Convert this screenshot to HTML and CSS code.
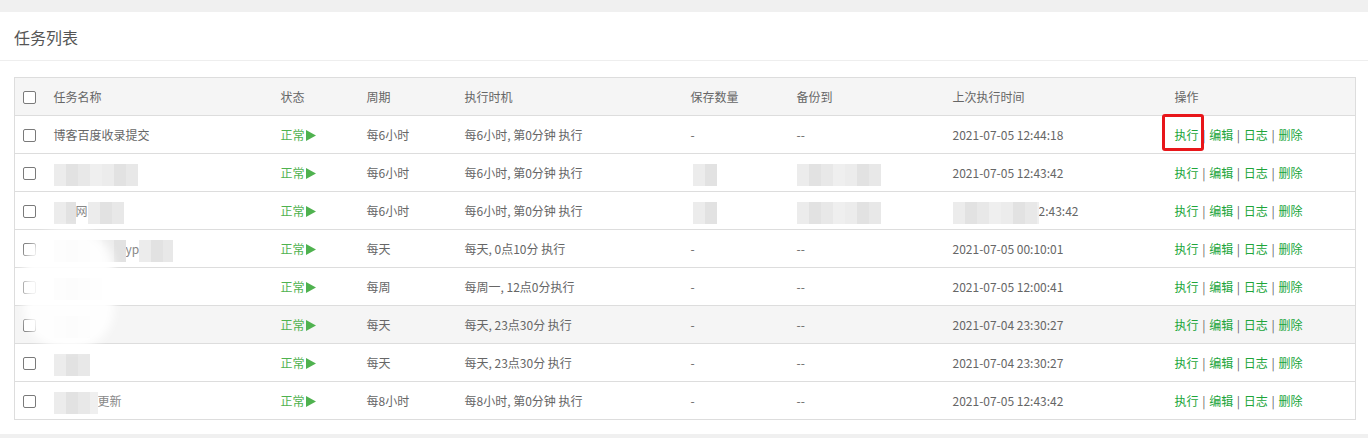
FILE: index.html
```html
<!DOCTYPE html>
<html lang="zh-CN">
<head>
<meta charset="utf-8">
<title>任务列表</title>
<link rel="stylesheet" href="styles.css">
</head>
<body>
<div class="panel">
  <div class="panel-title">任务列表</div>
  <div class="panel-body">
    <div class="table-wrap">
      <table class="tasks">
        <colgroup>
          <col style="width:31px"><col style="width:227px"><col style="width:86px"><col style="width:98px"><col style="width:226px"><col style="width:106px"><col style="width:156px"><col style="width:222px"><col>
        </colgroup>
        <thead>
          <tr><th class="ck"><span class="cb"></span></th><th>任务名称</th><th>状态</th><th>周期</th><th>执行时机</th><th>保存数量</th><th>备份到</th><th>上次执行时间</th><th>操作</th></tr>
        </thead>
        <tbody>
          <tr><td class="ck"><span class="cb"></span></td><td>博客百度收录提交</td><td class="st">正常<svg class="tri" width="10" height="11" viewBox="0 0 10 11"><polygon points="0,0 10,5.5 0,11" fill="#4fb24f"/></svg></td><td>每6小时</td><td>每6小时, 第0分钟 执行</td><td>-</td><td>--</td><td>2021-07-05 12:44:18</td><td class="ops"><a class="first">执行</a> | <a>编辑</a> | <a>日志</a> | <a>删除</a></td></tr>
          <tr><td class="ck"><span class="cb"></span></td><td><span class="mask" style="width:84px"></span></td><td class="st">正常<svg class="tri" width="10" height="11" viewBox="0 0 10 11"><polygon points="0,0 10,5.5 0,11" fill="#4fb24f"/></svg></td><td>每6小时</td><td>每6小时, 第0分钟 执行</td><td><span class="mask" style="width:24px;margin-left:2px"></span></td><td><span class="mask" style="width:84px"></span></td><td>2021-07-05 12:43:42</td><td class="ops"><a>执行</a> | <a>编辑</a> | <a>日志</a> | <a>删除</a></td></tr>
          <tr><td class="ck"><span class="cb"></span></td><td><span class="mask" style="width:22px"></span><span class="faint">网</span><span class="mask" style="width:36px"></span></td><td class="st">正常<svg class="tri" width="10" height="11" viewBox="0 0 10 11"><polygon points="0,0 10,5.5 0,11" fill="#4fb24f"/></svg></td><td>每6小时</td><td>每6小时, 第0分钟 执行</td><td><span class="mask" style="width:24px;margin-left:2px"></span></td><td><span class="mask" style="width:84px"></span></td><td><span class="mask" style="width:86px"></span>2:43:42</td><td class="ops"><a>执行</a> | <a>编辑</a> | <a>日志</a> | <a>删除</a></td></tr>
          <tr><td class="ck"><span class="cb"></span></td><td><span class="mask" style="width:72px"></span><span class="faint">yp</span><span class="mask" style="width:34px"></span></td><td class="st">正常<svg class="tri" width="10" height="11" viewBox="0 0 10 11"><polygon points="0,0 10,5.5 0,11" fill="#4fb24f"/></svg></td><td>每天</td><td>每天, 0点10分 执行</td><td>-</td><td>--</td><td>2021-07-05 00:10:01</td><td class="ops"><a>执行</a> | <a>编辑</a> | <a>日志</a> | <a>删除</a></td></tr>
          <tr><td class="ck"><span class="cb"></span></td><td><span class="mask" style="width:48px"></span></td><td class="st">正常<svg class="tri" width="10" height="11" viewBox="0 0 10 11"><polygon points="0,0 10,5.5 0,11" fill="#4fb24f"/></svg></td><td>每周</td><td>每周一, 12点0分执行</td><td>-</td><td>--</td><td>2021-07-05 12:00:41</td><td class="ops"><a>执行</a> | <a>编辑</a> | <a>日志</a> | <a>删除</a></td></tr>
          <tr class="hover"><td class="ck"><span class="cb"></span></td><td><span class="mask" style="width:36px"></span></td><td class="st">正常<svg class="tri" width="10" height="11" viewBox="0 0 10 11"><polygon points="0,0 10,5.5 0,11" fill="#4fb24f"/></svg></td><td>每天</td><td>每天, 23点30分 执行</td><td>-</td><td>--</td><td>2021-07-04 23:30:27</td><td class="ops"><a>执行</a> | <a>编辑</a> | <a>日志</a> | <a>删除</a></td></tr>
          <tr><td class="ck"><span class="cb"></span></td><td><span class="mask" style="width:36px"></span></td><td class="st">正常<svg class="tri" width="10" height="11" viewBox="0 0 10 11"><polygon points="0,0 10,5.5 0,11" fill="#4fb24f"/></svg></td><td>每天</td><td>每天, 23点30分 执行</td><td>-</td><td>--</td><td>2021-07-04 23:30:27</td><td class="ops"><a>执行</a> | <a>编辑</a> | <a>日志</a> | <a>删除</a></td></tr>
          <tr><td class="ck"><span class="cb"></span></td><td><span class="mask" style="width:44px"></span><span class="faint">更新</span></td><td class="st">正常<svg class="tri" width="10" height="11" viewBox="0 0 10 11"><polygon points="0,0 10,5.5 0,11" fill="#4fb24f"/></svg></td><td>每8小时</td><td>每8小时, 第0分钟 执行</td><td>-</td><td>--</td><td>2021-07-05 12:43:42</td><td class="ops"><a>执行</a> | <a>编辑</a> | <a>日志</a> | <a>删除</a></td></tr>
        </tbody>
      </table>
      <div class="smear"></div>
      <div class="redbox"></div>
    </div>
  </div>
</div>
</body>
</html>
```
FILE: styles.css
```css
html, body {
  margin: 0;
  padding: 0;
}
body {
  background: #f0f0f0;
  font-family: "Noto Sans CJK SC", "Microsoft YaHei", sans-serif;
  font-size: 12px;
  color: #666;
  padding-top: 12px;
  height: 438px;
  box-sizing: border-box;
}
.panel {
  background: #fff;
  height: 422px;
  box-sizing: border-box;
}
.panel-title {
  height: 49px;
  line-height: 51px;
  padding-left: 14px;
  font-size: 16px;
  color: #555;
  border-bottom: 1px solid #eee;
  box-sizing: border-box;
}
.panel-body {
  padding: 16px 12px 0 14px;
}
.table-wrap {
  position: relative;
}
.tasks {
  width: 1342px;
  border-collapse: collapse;
  table-layout: fixed;
  border: 1px solid #ddd;
}
.tasks th, .tasks td {
  height: 37px;
  padding: 0 0 0 8px;
  text-align: left;
  font-weight: normal;
  border-top: 1px solid #ddd;
  white-space: nowrap;
  overflow: hidden;
  vertical-align: middle;
  line-height: 37px;
}
.tasks thead tr {
  background: #f5f5f5;
}
.tasks tr.hover {
  background: #f5f5f5;
}
.tasks .ck {
  padding-left: 8px;
}
.cb {
  display: inline-block;
  width: 11px;
  height: 11px;
  border: 1px solid #7a7a7a;
  border-radius: 2px;
  background: #fff;
  vertical-align: middle;
  position: relative;
  top: -1px;
}
.st {
  color: #4fb24f;
}
.tri {
  vertical-align: middle;
  margin-left: 1px;
  position: relative;
  top: -1px;
}
.ops {
  word-spacing: 1px;
}
.ops a {
  color: #20a53a;
  text-decoration: none;
}
.mask {
  display: inline-block;
  height: 22px;
  vertical-align: middle;
  background:
    linear-gradient(90deg, #ececec 0 25%, #e2e2e2 25% 50%, #e8e8e8 50% 75%, #efefef 75% 100%);
  background-size: 48px 11px;
  filter: blur(0.6px);
}
.faint {
  color: #888;
}
.smear {
  position: absolute;
  left: 10px;
  top: 152px;
  width: 90px;
  height: 120px;
  background: rgba(255, 255, 255, 0.9);
  border-radius: 40px;
  filter: blur(5px);
}
.redbox {
  position: absolute;
  left: 1148px;
  top: 37px;
  width: 36px;
  height: 31px;
  border: 3px solid #e8161a;
  border-radius: 3px;
}
```
